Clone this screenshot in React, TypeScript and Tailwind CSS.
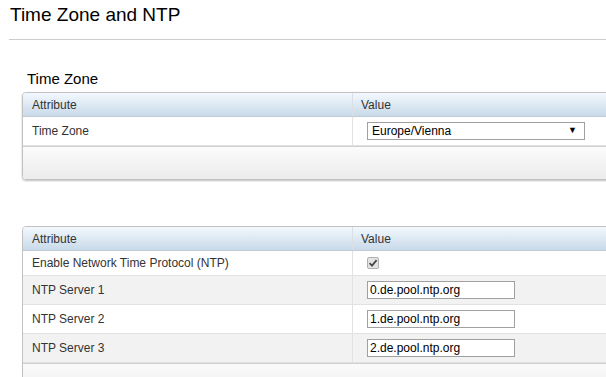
import React from 'react';

const font = { fontFamily: '"Liberation Sans", Arial, sans-serif' };

function HeaderRow() {
  return (
    <div className="flex h-[24px] bg-gradient-to-b from-[#f3f8fd] to-[#c8dae9] border-b border-[#c3ccd4] text-[12px] text-[#333]">
      <div className="w-[330px] pl-[9px] flex items-center border-r border-[#d9dfe4]">Attribute</div>
      <div className="flex-1 pl-[8px] flex items-center">Value</div>
    </div>
  );
}

function Row({ label, alt, h, children }: { label: string; alt?: boolean; h: string; children: React.ReactNode }) {
  return (
    <div className={`flex ${h} border-b border-[#e2e2e2] text-[12px] text-[#333] ${alt ? 'bg-[#f2f2f2]' : 'bg-white'}`}>
      <div className="w-[330px] pl-[9px] flex items-center border-r border-[#e2e2e2]">{label}</div>
      <div className="flex-1 pl-[14px] flex items-center">{children}</div>
    </div>
  );
}

function TextBox({ value }: { value: string }) {
  return (
    <div className="w-[148px] h-[18px] border border-[#a0a0a0] bg-white pl-[2px] flex items-center text-[12px] text-black">
      {value}
    </div>
  );
}

export default function App() {
  return (
    <div className="w-[606px] h-[377px] overflow-hidden bg-white" style={font}>
      <div className="ml-[9px] pt-[3px] pb-[12px] border-b border-[#cccccc]">
        <div className="ml-[1px] text-[19px] leading-[24px] text-black">Time Zone and NTP</div>
      </div>

      <div className="ml-[27px] mt-[30px] text-[15px] leading-[18px] text-black">Time Zone</div>

      <div className="ml-[22px] mt-[4px] w-[620px] border border-[#c2c2c2] rounded-[4px] overflow-hidden shadow-[0_1px_2px_rgba(0,0,0,0.25)]">
        <HeaderRow />
        <Row label="Time Zone" h="h-[29px]">
          <div className="w-[218px] h-[18px] border border-[#a0a0a0] bg-white flex items-center justify-between pl-[4px] pr-[7px] text-[12px] text-black">
            <span>Europe/Vienna</span>
            <span className="text-[9px]">▼</span>
          </div>
        </Row>
        <div className="h-[33px] border-t border-[#cfcfcf] bg-gradient-to-b from-[#fbfbfb] to-[#ececec]" />
      </div>

      <div className="ml-[22px] mt-[46px] w-[620px] border border-[#c2c2c2] rounded-t-[4px] overflow-hidden">
        <HeaderRow />
        <Row label="Enable Network Time Protocol (NTP)" h="h-[25px]">
          <div className="w-[12px] h-[12px] rounded-[2px] border border-[#b0b0b0] bg-[#e4e4e4] flex items-center justify-center">
            <svg width="10" height="10" viewBox="0 0 10 10">
              <path d="M1.5 5.2 L4 7.6 L8.6 2.2" fill="none" stroke="#4a4a4a" strokeWidth="1.8" />
            </svg>
          </div>
        </Row>
        <Row label="NTP Server 1" alt h="h-[29px]">
          <TextBox value="0.de.pool.ntp.org" />
        </Row>
        <Row label="NTP Server 2" h="h-[29px]">
          <TextBox value="1.de.pool.ntp.org" />
        </Row>
        <Row label="NTP Server 3" alt h="h-[29px]">
          <TextBox value="2.de.pool.ntp.org" />
        </Row>
        <div className="h-[33px] border-t border-[#cfcfcf] bg-gradient-to-b from-[#fbfbfb] to-[#ececec]" />
      </div>
    </div>
  );
}
